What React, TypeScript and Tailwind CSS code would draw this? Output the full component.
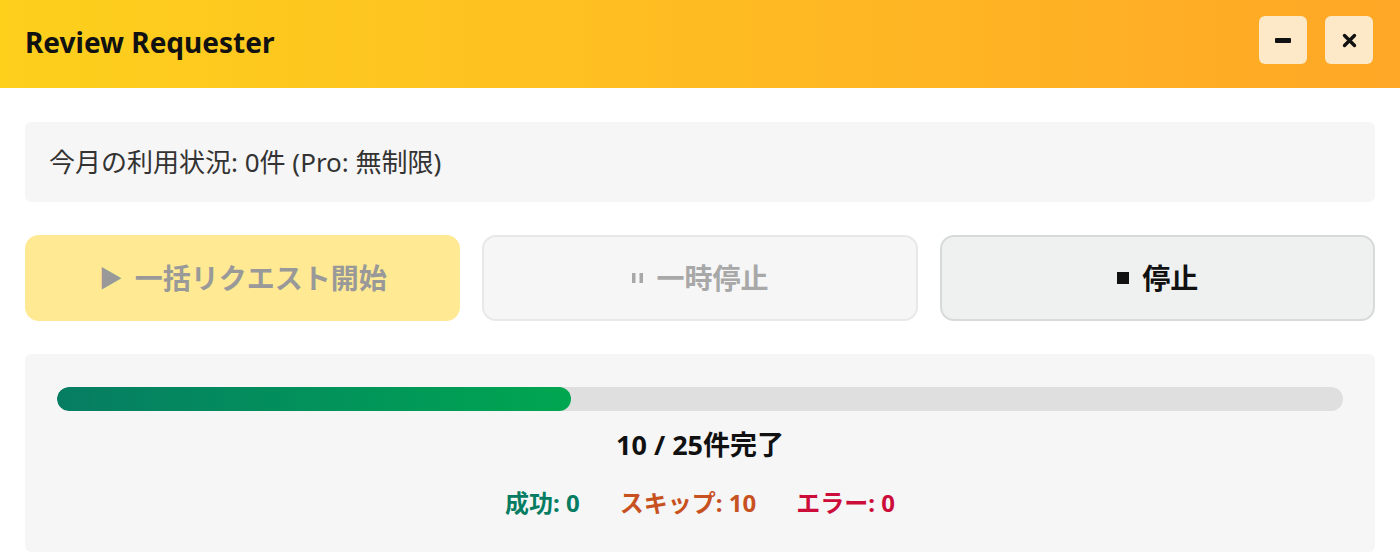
const font = { fontFamily: '"Noto Sans", "Noto Sans CJK JP", sans-serif' };

function HeaderButton({ children }: { children: React.ReactNode }) {
    return (
        <button className="w-12 h-12 rounded-md bg-[#fde8c8] flex items-center justify-center text-[#111]">
            {children}
        </button>
    );
}

export default function App() {
    const done = 10;
    const total = 25;
    const pct = (done / total) * 100;

    return (
        <div className="w-[1400px] h-[560px] bg-white overflow-hidden" style={font}>
            <header className="h-[88px] flex items-center justify-between pl-[25px] pr-[27px] pb-2 bg-gradient-to-r from-[#fdd01c] to-[#ffa726]">
                <h1 className="mt-1 text-[28px] leading-[36px] font-bold text-[#111]">Review Requester</h1>
                <div className="flex gap-[18px]">
                    <HeaderButton>
                        <svg width="16" height="5" viewBox="0 0 16 5">
                            <rect x="0" y="0" width="16" height="5" rx="1" fill="#111" />
                        </svg>
                    </HeaderButton>
                    <HeaderButton>
                        <svg width="15" height="15" viewBox="0 0 15 15">
                            <path d="M2.5 2.5 L12.5 12.5 M12.5 2.5 L2.5 12.5" stroke="#111" strokeWidth="3.4" strokeLinecap="round" />
                        </svg>
                    </HeaderButton>
                </div>
            </header>

            <main className="px-[25px] pt-[34px] flex flex-col">
                <div className="h-[80px] rounded-md bg-[#f6f6f6] flex items-center px-6">
                    <p className="text-[26px] leading-[36px] text-[#333]">今月の利用状況: 0件 (Pro: 無制限)</p>
                </div>

                <div className="mt-[33px] grid grid-cols-3 gap-[22px]">
                    <button className="h-[86px] rounded-[14px] bg-[#ffe993] text-[#999] text-[28px] font-bold flex items-center justify-center gap-3">
                        <span className="text-[24px]">▶</span>
                        <span>一括リクエスト開始</span>
                    </button>
                    <button className="h-[86px] rounded-[14px] bg-[#f6f6f6] border-2 border-[#e8e8e8] text-[#a8a8a8] text-[28px] font-bold flex items-center justify-center gap-3">
                        <svg width="13" height="12" viewBox="0 0 13 12">
                            <rect x="1" y="1" width="3.5" height="10" fill="#a8a8a8" />
                            <rect x="8.5" y="1" width="3.5" height="10" fill="#a8a8a8" />
                        </svg>
                        <span>一時停止</span>
                    </button>
                    <button className="h-[86px] rounded-[14px] bg-[#eff0f0] border-2 border-[#d8dada] text-[#111] text-[28px] font-bold flex items-center justify-center gap-3">
                        <svg width="14" height="14" viewBox="0 0 14 14">
                            <rect x="1" y="1" width="12" height="12" fill="#111" />
                        </svg>
                        <span>停止</span>
                    </button>
                </div>

                <div className="mt-[33px] h-[198px] rounded-md bg-[#f6f6f6] px-8 pt-[33px]">
                    <div className="h-6 rounded-full bg-[#dfdfdf] overflow-hidden">
                        <div
                            className="h-full rounded-full bg-gradient-to-r from-[#067d62] to-[#00a650]"
                            style={{ width: `${pct}%` }}
                        />
                    </div>
                    <p className="mt-[15px] text-center text-[27px] leading-[38px] font-bold text-[#111]">
                        {done} / {total}件完了
                    </p>
                    <div className="mt-[22px] flex justify-center gap-10 text-[24px] leading-[34px] font-bold">
                        <span className="text-[#067d62]">成功: 0</span>
                        <span className="text-[#c7511f]">スキップ: 10</span>
                        <span className="text-[#cc0c39]">エラー: 0</span>
                    </div>
                </div>
            </main>
        </div>
    );
}
